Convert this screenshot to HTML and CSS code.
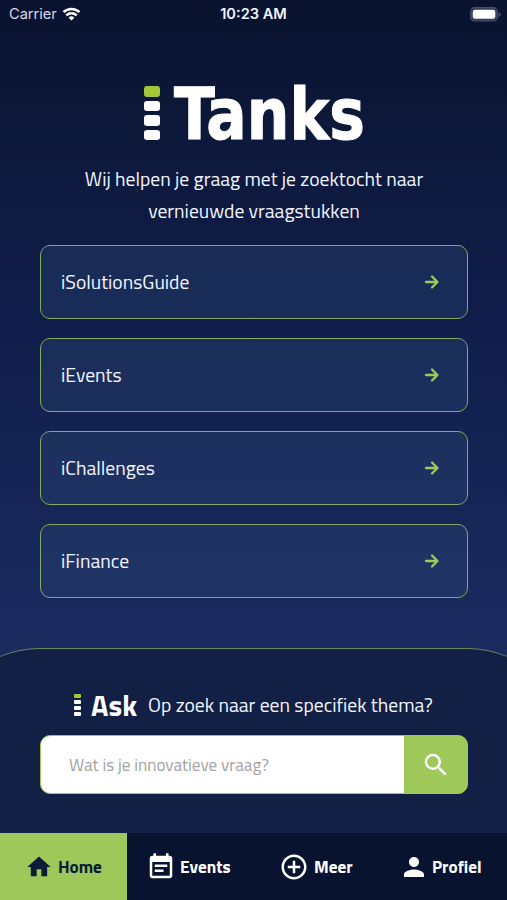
FILE: index.html
```html
<!DOCTYPE html>
<html lang="nl">
<head>
    <meta charset="UTF-8">
    <meta name="viewport" content="width=device-width, initial-scale=1.0">
    <title>iTanks</title>
    <link rel="stylesheet" href="styles.css">
</head>
<body>
    <div class="app">
        <header class="status-bar">
            <div class="carrier">
                <span>Carrier</span>
                <svg width="19" height="14" viewBox="0 0 18 14" fill="none" stroke="#fff" stroke-width="2.5">
                    <path d="M1 5.2a11.5 11.5 0 0 1 16 0M3.8 8.3a7.5 7.5 0 0 1 10.4 0"/>
                    <path d="M9 13.6L6.1 10.7a4.2 4.2 0 0 1 5.8 0z" fill="#fff" stroke="none"/>
                </svg>
            </div>
            <span class="time">10:23 AM</span>
            <div class="power">
                <svg width="31" height="15" viewBox="0 0 31 15">
                    <rect x=".7" y=".7" width="26.6" height="13.2" rx="4" fill="#303958" stroke="#464e6c" stroke-width="1.2"/>
                    <rect x="2.8" y="2.8" width="22.5" height="9" rx="2.3" fill="#fff"/>
                    <path d="M28.7 5v5q2-.8 2-2.5t-2-2.5z" fill="#464e6c"/>
                </svg>
            </div>
        </header>

        <main class="main">
            <h1 class="logo">
                <span class="tower"><i></i><i></i><i></i><i></i></span>
                <span class="logo-text">Tanks</span>
            </h1>
            <p class="intro">Wij helpen je graag met je zoektocht naar<br>vernieuwde vraagstukken</p>

            <div class="menu">
                <a class="card">
                    <span>iSolutionsGuide</span>
                    <svg class="arrow" viewBox="0 0 16 16"><path d="M2 8h11M8 2.5L13.5 8L8 13.5"/></svg>
                </a>
                <a class="card">
                    <span>iEvents</span>
                    <svg class="arrow" viewBox="0 0 16 16"><path d="M2 8h11M8 2.5L13.5 8L8 13.5"/></svg>
                </a>
                <a class="card">
                    <span>iChallenges</span>
                    <svg class="arrow" viewBox="0 0 16 16"><path d="M2 8h11M8 2.5L13.5 8L8 13.5"/></svg>
                </a>
                <a class="card">
                    <span>iFinance</span>
                    <svg class="arrow" viewBox="0 0 16 16"><path d="M2 8h11M8 2.5L13.5 8L8 13.5"/></svg>
                </a>
            </div>
        </main>

        <section class="ask">
            <div class="ask-title">
                <span class="tower tower-small"><i></i><i></i><i></i><i></i></span>
                <span class="ask-name">Ask</span>
                <span class="ask-text">Op zoek naar een specifiek thema?</span>
            </div>
            <form class="search">
                <input class="search-input" type="text" placeholder="Wat is je innovatieve vraag?">
                <button class="search-button" type="button">
                    <svg width="30" height="30" viewBox="0 0 24 24" fill="#fff"><path d="M15.5 14h-.79l-.28-.27A6.47 6.47 0 0 0 16 9.5 6.5 6.5 0 1 0 9.5 16c1.61 0 3.09-.59 4.23-1.57l.27.28v.79l5 4.99L20.49 19l-4.99-5zm-6 0C7.01 14 5 11.99 5 9.5S7.01 5 9.5 5 14 7.01 14 9.5 11.99 14 9.5 14z"/></svg>
                </button>
            </form>
        </section>

        <nav class="tabs">
            <a class="tab active">
                <svg width="28" height="28" viewBox="0 0 24 24"><path d="M10 20v-6h4v6h5v-8h3L12 3 2 12h3v8z"/></svg>
                <span>Home</span>
            </a>
            <a class="tab">
                <svg width="30" height="30" viewBox="0 0 24 24"><path d="M17 10H7v2h10v-2zm2-7h-1V1h-2v2H8V1H6v2H5a2 2 0 0 0-2 2v14c0 1.1.9 2 2 2h14c1.1 0 2-.9 2-2V5c0-1.1-.9-2-2-2zm0 16H5V8h14v11zm-5-5H7v2h7v-2z"/></svg>
                <span>Events</span>
            </a>
            <a class="tab">
                <svg width="30" height="30" viewBox="0 0 24 24"><path d="M13 7h-2v4H7v2h4v4h2v-4h4v-2h-4V7zm-1-5C6.48 2 2 6.48 2 12s4.48 10 10 10 10-4.480 10-10S17.52 2 12 2zm0 18c-4.41 0-8-3.59-8-8s3.590-8 8-8 8 3.590 8 8-3.590 8-8 8z"/></svg>
                <span>Meer</span>
            </a>
            <a class="tab">
                <svg width="30" height="30" viewBox="0 0 24 24"><path d="M12 12c2.210 0 4-1.790 4-4s-1.790-4-4-4-4 1.790-4 4 1.790 4 4 4zm0 2c-2.670 0-8 1.340-8 4v2h16v-2c0-2.660-5.330-4-8-4z"/></svg>
                <span>Profiel</span>
            </a>
        </nav>
    </div>
</body>
</html>
```
FILE: styles.css
```css
* {
    box-sizing: border-box;
}
body {
    margin: 0;
    font-family: "Titillium Web", Roboto, "Noto Sans", sans-serif;
    color: #f1f5ff;
}
.app {
    display: flex;
    flex-direction: column;
    height: 900px;
    overflow: hidden;
    background: linear-gradient(#09132f 0, #0c1738 100px, #101d49 300px, #1b2b60 650px);
}
.status-bar {
    display: grid;
    grid-template-columns: 1fr auto 1fr;
    align-items: center;
    height: 28px;
    padding: 0 7px 0 9px;
    font-family: Inter, sans-serif;
    font-size: 14.6px;
}
.carrier {
    display: flex;
    align-items: center;
    gap: 5px;
    color: #d5daea;
}
.time {
    margin-right: 2px;
    font-weight: 600;
}
.power {
    display: flex;
    justify-content: flex-end;
}
.power svg {
    margin-right: -1px;
}
.main {
    height: 620px;
    padding: 55px 39px 0 40px;
}
.logo {
    display: flex;
    height: 60px;
    margin: 0;
    padding-left: 104px;
    gap: 14px;
}
.tower {
    display: flex;
    flex-direction: column;
    gap: 4px;
    width: 16px;
    padding-top: 3px;
}
.tower i {
    height: 10.5px;
    border-radius: 3px;
    background: #fff;
}
.tower i:first-child {
    background: #a4c639;
}
.logo-text {
    font-family: "DejaVu Sans Condensed", "DejaVu Sans", sans-serif;
    font-size: 72px;
    font-stretch: condensed;
    font-weight: 700;
    line-height: 63px;
    color: #fff;
    -webkit-text-stroke: 1px #fff;
    transform: scaleX(.925);
    transform-origin: left;
}
.intro {
    margin: 20px 0 18px;
    font-size: 19.6px;
    line-height: 32px;
    text-align: center;
}
.menu {
    display: flex;
    flex-direction: column;
    gap: 19px;
}
.card {
    display: flex;
    align-items: center;
    justify-content: space-between;
    height: 74px;
    padding: 0 27px 0 20px;
    border: 1px solid #84aa66;
    border-radius: 10px;
    background: rgba(47, 78, 120, .32);
    background-clip: padding-box;
    font-size: 19.6px;
}
.card span {
    line-height: 30px;
}
.arrow {
    width: 16px;
    height: 16px;
    margin-bottom: 1px;
    fill: none;
    stroke: #a0cb5b;
    stroke-width: 2.3;
    stroke-linecap: round;
    stroke-linejoin: round;
}
.ask {
    flex: 1;
    margin: 0 -64px;
    padding: 39px 103px 0 104px;
    border-top: 1px solid #688c5c;
    border-radius: 104px 104px 0 0;
    background: #112044;
}
.ask-title {
    display: flex;
    align-items: center;
    height: 34px;
    padding-left: 34px;
}
.tower-small {
    width: 7px;
    gap: 2px;
    padding: 0;
}
.tower-small i {
    height: 4px;
    border-radius: 1px;
}
.ask-name {
    margin: 0 11px 0 10px;
    font-size: 29px;
    font-weight: 700;
    line-height: 34px;
    color: #fff;
}
.ask-text {
    font-size: 19.6px;
}
.search {
    display: flex;
    height: 59px;
    margin: 13px 0 0;
    border: 1px solid #9fc95a;
    border-radius: 10px;
    overflow: hidden;
    background: #9fc85b;
}
.search-input {
    flex: 1;
    min-width: 0;
    padding: 0 28px;
    border: 0;
    font-family: inherit;
    font-size: 17.2px;
    background: #fff;
}
.search-input::placeholder {
    color: #a3a3a3;
}
.search-button {
    width: 63px;
    padding: 0;
    border: 0;
    background: #9fc85b;
}
.search-button svg {
    display: block;
    margin: 0 auto;
}
.tabs {
    display: grid;
    grid-template-columns: 127px 126px 127px 127px;
    height: 67px;
    background: #081330;
}
.tab {
    display: flex;
    align-items: center;
    padding: 1px 0 0 25px;
    gap: 5px;
    font-size: 17.2px;
    font-weight: 700;
    color: #fff;
}
.tab + .tab {
    padding-left: 19px;
    gap: 4px;
}
.tab svg {
    flex: none;
    fill: currentColor;
}
.tab:nth-child(3) {
    padding-left: 26px;
    gap: 5px;
}
.tab:nth-child(4) {
    gap: 3px;
}
.active {
    background: #9fc85b;
    color: #0b1c38;
}
```
